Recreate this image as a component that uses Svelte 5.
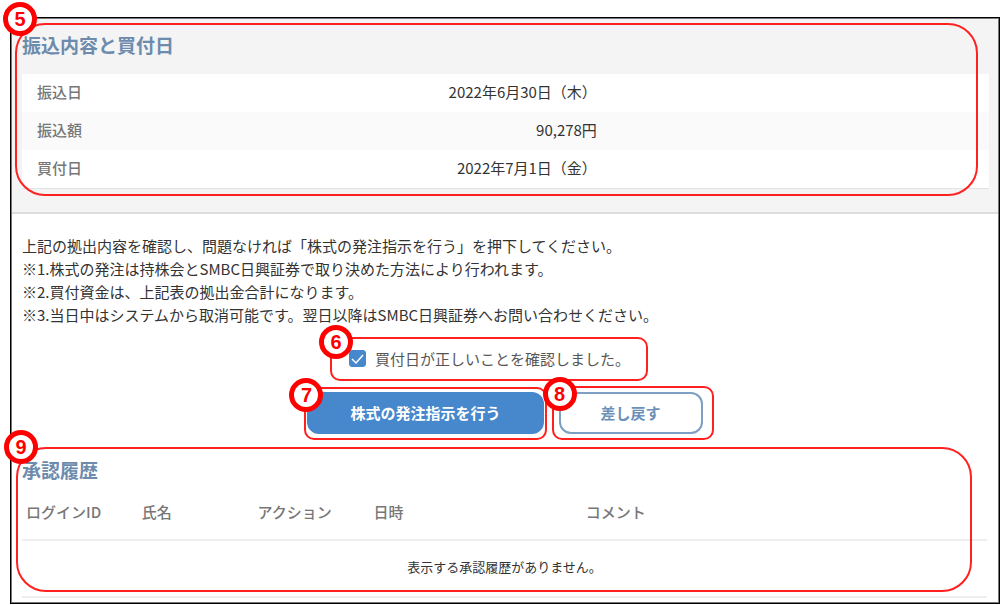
<script>
  let confirmed = $state(true);

  const transfer = [
    { label: '振込日', value: '2022年6月30日（木）' },
    { label: '振込額', value: '90,278円' },
    { label: '買付日', value: '2022年7月1日（金）' },
  ];

  const notes = [
    '上記の拠出内容を確認し、問題なければ「株式の発注指示を行う」を押下してください。',
    '※1.株式の発注は持株会とSMBC日興証券で取り決めた方法により行われます。',
    '※2.買付資金は、上記表の拠出金合計になります。',
    '※3.当日中はシステムから取消可能です。翌日以降はSMBC日興証券へお問い合わせください。',
  ];

  const columns = ['ログインID', '氏名', 'アクション', '日時', 'コメント'];
  let history = $state([]);
</script>

<!-- Numbered red outline laid over the part it explains -->
{#snippet callout(number)}
  <span class="callout callout-{number}">
    <span class="badge">{number}</span>
  </span>
{/snippet}

<main>
  <section class="transfer">
    <h2>振込内容と買付日</h2>
    <table>
      <tbody>
        {#each transfer as { label, value }}
          <tr>
            <th scope="row">{label}</th>
            <td class="value">{value}</td>
            <td class="rest"></td>
          </tr>
        {/each}
      </tbody>
    </table>
    {@render callout(5)}
  </section>

  <section class="confirm">
    <div class="notes">
      {#each notes as note}
        <p>{note}</p>
      {/each}
    </div>

    <div class="check-row">
      <label>
        <span class="box">
          <input type="checkbox" bind:checked={confirmed} />
          <svg viewBox="0 0 17 17" aria-hidden="true">
            <path d="M3 9 L7 13 L14 5" />
          </svg>
        </span>
        買付日が正しいことを確認しました。
        {@render callout(6)}
      </label>
    </div>

    <div class="actions">
      <div class="action">
        <button class="primary" disabled={!confirmed}>株式の発注指示を行う</button>
        {@render callout(7)}
      </div>
      <div class="action">
        <button class="secondary">差し戻す</button>
        {@render callout(8)}
      </div>
    </div>
  </section>

  <section class="history">
    <h2>承認履歴</h2>
    <table>
      <thead>
        <tr>
          {#each columns as column}
            <th scope="col">{column}</th>
          {/each}
        </tr>
      </thead>
      <tbody>
        {#each history as row}
          <tr>
            {#each row as cell}
              <td>{cell}</td>
            {/each}
          </tr>
        {:else}
          <tr>
            <td class="empty" colspan="5">表示する承認履歴がありません。</td>
          </tr>
        {/each}
      </tbody>
    </table>
    {@render callout(9)}
  </section>
</main>

<style>
  :global(body) {
    background: #fff;
  }

  main {
    margin: 18px 1px 1px 11px;
    border: 1px solid #777;
    outline: 1px solid #000;
    font-family: "Noto Sans CJK JP", sans-serif;
    font-size: 15px;
    line-height: 23px;
    color: #333;
  }

  section {
    position: relative;
  }

  h2 {
    margin: 0;
    font-size: 19px;
    line-height: 28px;
    font-weight: 700;
    color: #6c8bad;
  }

  table {
    width: 100%;
    border-collapse: collapse;
    table-layout: fixed;
  }

  th {
    font-weight: 500;
    text-align: left;
    color: #777;
  }

  td,
  th {
    box-sizing: border-box;
    padding: 0 15px 3px;
  }

  .transfer {
    padding: 12px 9px 24px 10px;
    background: #f4f4f4;
    border-bottom: 2px solid #ddd;
  }

  .transfer table {
    margin-top: 15px;
    background: #fff;
    box-shadow: 0 1px 1px #e4e4e4;
  }

  .transfer tr {
    height: 38px;
  }

  .transfer tr:nth-child(even) {
    background: #fafafa;
  }

  .value {
    text-align: right;
  }

  .rest {
    width: 39%;
    padding: 0;
  }

  .confirm {
    padding: 20px 10px 13px;
  }

  .notes p {
    margin: 0;
  }

  .check-row {
    display: flex;
    justify-content: center;
    margin-top: 11px;
    padding-right: 32px;
  }

  label {
    position: relative;
    display: flex;
    align-items: center;
    gap: 9px;
    min-height: 42px;
    padding: 0 18px 2px 19px;
    color: #555;
  }

  .box {
    position: relative;
    width: 17px;
    height: 17px;
  }

  .box input {
    display: block;
    appearance: none;
    width: 17px;
    height: 17px;
    margin: 0;
    border: 1px solid #4787cb;
    border-radius: 3px;
  }

  .box input:checked {
    background: #4787cb;
  }

  .box svg {
    position: absolute;
    inset: 0;
    fill: none;
    stroke: #fff;
    stroke-width: 1.5;
    pointer-events: none;
  }

  .actions {
    display: flex;
    justify-content: center;
    gap: 15px;
    margin-top: 11px;
  }

  .action {
    position: relative;
  }

  button {
    display: block;
    height: 42px;
    padding: 0 40px 2px;
    border: 2px solid #4787cb;
    border-radius: 12px;
    font: inherit;
    font-weight: 700;
    cursor: pointer;
  }

  .primary {
    padding: 0 41px 2px;
    background: #4787cb;
    color: #fff;
  }

  .secondary {
    border-color: #7c9fc3;
    background: #fff;
    color: #6c91b9;
  }

  .history {
    padding: 9px 11px 4px 10px;
  }

  .history table {
    margin-top: 2px;
  }

  .history tr {
    border-bottom: 2px solid #eee;
  }

  .history th,
  .history td {
    height: 54px;
    padding: 0 4px 2px;
  }

  .history th:nth-child(-n + 2) {
    width: 12%;
  }

  .history th:nth-child(3) {
    width: 12%;
  }

  .history th:nth-child(4) {
    width: 22%;
  }

  .history .empty {
    height: 57px;
    padding-bottom: 4px;
    font-size: 13px;
    text-align: center;
  }

  .callout {
    position: absolute;
    border: 2px solid #ff2020;
    border-radius: 10px;
    pointer-events: none;
  }

  .callout-5 {
    inset: 4px 20px 16px 3px;
    border-radius: 30px;
  }

  .callout-6 {
    inset: 0;
  }

  .callout-7 {
    inset: -5px -3px -6px;
  }

  .callout-8 {
    inset: -6px -11px -6px -7px;
  }

  .callout-9 {
    inset: 0 26px 10px 4px;
    border-radius: 30px;
  }

  .badge {
    position: absolute;
    top: -14px;
    left: -13px;
    box-sizing: border-box;
    width: 34px;
    height: 34px;
    border: 5px solid #f00;
    border-radius: 50%;
    background: #fff;
    font-family: "Liberation Sans", Arial, sans-serif;
    font-size: 20px;
    line-height: 24px;
    font-weight: 700;
    text-align: center;
    color: #f00;
  }

  .callout-5 .badge {
    top: -23px;
    left: -14px;
  }

  .callout-7 .badge,
  .callout-8 .badge {
    top: -11px;
    left: -17px;
  }

  .callout-8 .badge {
    left: -11px;
  }

  .callout-9 .badge {
    top: -19px;
    left: -14px;
  }
</style>
